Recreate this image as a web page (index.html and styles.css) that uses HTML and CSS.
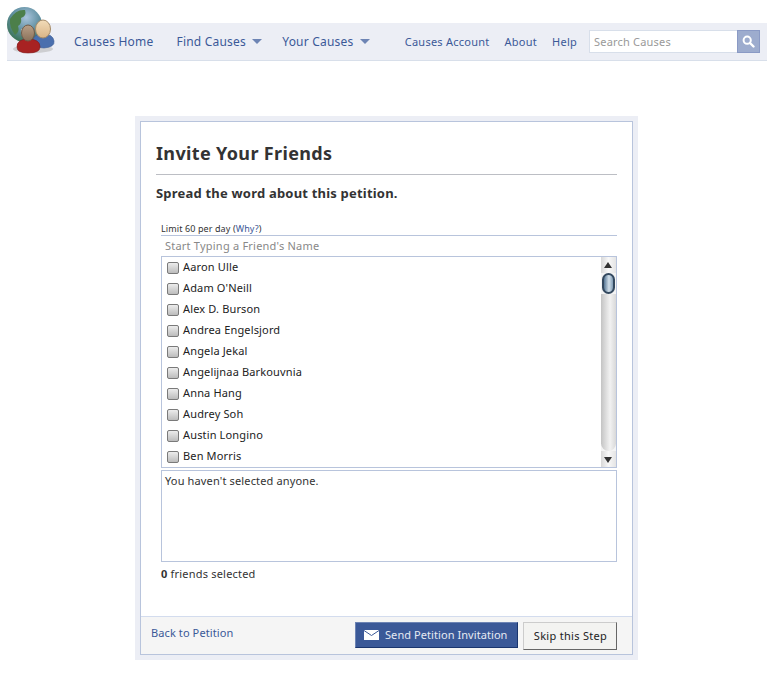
FILE: index.html
```html
<!DOCTYPE html>
<html lang="en">
<head>
    <meta charset="UTF-8">
    <meta name="viewport" content="width=device-width, initial-scale=1.0">
    <title>Invite Your Friends</title>
    <link rel="stylesheet" href="styles.css">
</head>
<body>
    <div class="header">
        <svg class="logo" width="50" height="50" viewBox="0 0 50 50">
            <defs>
                <radialGradient id="globe" cx="0.55" cy="0.3" r="0.8">
                    <stop offset="0" stop-color="#a9c4dc"/>
                    <stop offset="0.5" stop-color="#5f8fa0"/>
                    <stop offset="1" stop-color="#2f6a3c"/>
                </radialGradient>
                <linearGradient id="skinA" x1="0" y1="0" x2="0" y2="1">
                    <stop offset="0" stop-color="#f2dcb9"/>
                    <stop offset="1" stop-color="#d9b486"/>
                </linearGradient>
                <linearGradient id="skinB" x1="0" y1="0" x2="0" y2="1">
                    <stop offset="0" stop-color="#b8a088"/>
                    <stop offset="1" stop-color="#8b715a"/>
                </linearGradient>
            </defs>
            <ellipse cx="26" cy="42" rx="20" ry="4" fill="#b9b9b9" opacity="0.6"/>
            <circle cx="17.5" cy="17.5" r="17.5" fill="url(#globe)"/>
            <path d="M3 12 Q9 2 18 3 Q20 9 14 11 Q15 17 11 19 Q13 25 8 28 Q2 20 3 12Z" fill="#4c7f4a"/>
            <path d="M14 22 Q20 20 22 25 L18 32 Q13 29 14 22Z" fill="#c3cfc0"/>
            <path d="M26 33 Q27 27 36 27 Q46 27 47 34 Q48 40 37 41 Q27 41 26 33Z" fill="#4a6fae" stroke="#3c5c94" stroke-width="0.6"/>
            <ellipse cx="36" cy="22" rx="7.5" ry="9" fill="url(#skinA)" stroke="#a58b68"/>
            <path d="M10 40 Q10 32 21 32 Q33 32 33 40 Q33 46 21 46 Q10 46 10 40Z" fill="#a82222" stroke="#7f1818" stroke-width="0.6"/>
            <ellipse cx="21" cy="26" rx="6.5" ry="8" fill="url(#skinB)" stroke="#6f5a48"/>
        </svg>
        <nav class="nav-main">
            <a class="nav-home" href="#">Causes Home</a>
            <a href="#">Find Causes <span class="caret"></span></a>
            <a href="#">Your Causes <span class="caret"></span></a>
        </nav>
        <nav class="nav-side">
            <a href="#">Causes Account</a>
            <a href="#">About</a>
            <a href="#">Help</a>
        </nav>
        <form class="search">
            <input class="search-input" type="text" placeholder="Search Causes">
            <button class="search-btn" type="button">
                <svg width="13" height="13" viewBox="0 0 13 13">
                    <circle cx="5.2" cy="5.2" r="3.6" fill="none" stroke="#fff" stroke-width="2"/>
                    <path d="M8 8 L11.5 11.5" stroke="#fff" stroke-width="2.4" stroke-linecap="round"/>
                </svg>
            </button>
        </form>
    </div>

    <div class="dialog-outer">
        <div class="dialog">
            <div class="dialog-body">
                <h1>Invite Your Friends</h1>
                <h2>Spread the word about this petition.</h2>
                <div class="picker">
                    <div class="limit">Limit 60 per day (<a href="#">Why?</a>)</div>
                    <input class="friend-search" type="text" placeholder="Start Typing a Friend's Name">
                    <div class="friend-list">
                        <ul>
                            <li><span class="check"></span>Aaron Ulle</li>
                            <li><span class="check"></span>Adam O'Neill</li>
                            <li><span class="check"></span>Alex D. Burson</li>
                            <li><span class="check"></span>Andrea Engelsjord</li>
                            <li><span class="check"></span>Angela Jekal</li>
                            <li><span class="check"></span>Angelijnaa Barkouvnia</li>
                            <li><span class="check"></span>Anna Hang</li>
                            <li><span class="check"></span>Audrey Soh</li>
                            <li><span class="check"></span>Austin Longino</li>
                            <li><span class="check"></span>Ben Morris</li>
                        </ul>
                        <div class="scrollbar">
                            <div class="arrow arrow-up"></div>
                            <div class="thumb"></div>
                            <div class="track"></div>
                            <div class="arrow arrow-down"></div>
                        </div>
                    </div>
                    <div class="selected-box">You haven't selected anyone.</div>
                    <div class="count"><b>0</b> friends selected</div>
                </div>
            </div>
            <div class="dialog-footer">
                <a class="back" href="#">Back to Petition</a>
                <button class="btn-send" type="button">
                    <svg width="15" height="10" viewBox="0 0 15 10">
                        <rect width="15" height="10" fill="#fff"/>
                        <path d="M0 0.5 L7.5 5.5 L15 0.5" fill="none" stroke="#3b5998" stroke-width="1"/>
                    </svg>
                    Send Petition Invitation
                </button>
                <button class="btn-skip" type="button">Skip this Step</button>
            </div>
        </div>
    </div>
</body>
</html>
```

FILE: styles.css
```css
* {
    box-sizing: border-box;
}
body {
    margin: 0;
    font-family: "Noto Sans", sans-serif;
    font-size: 11px;
    letter-spacing: 0.15px;
    color: #333;
    background: #fff;
}
a {
    color: #3b5998;
    text-decoration: none;
}
input,
button {
    font-family: "Noto Sans", sans-serif;
    font-size: 11px;
    letter-spacing: 0.15px;
}
.header {
    position: relative;
    display: flex;
    align-items: center;
    height: 38px;
    margin: 23px 10px 0 7px;
    padding-left: 67px;
    background: #eceef5;
    border-bottom: 1px solid #d8dfea;
}
.logo {
    position: absolute;
    left: 0;
    top: -16px;
}
.nav-main {
    display: flex;
    gap: 20px;
    font-size: 12px;
    letter-spacing: 0.2px;
}
.nav-home {
    margin-right: 3px;
}
.caret {
    display: inline-block;
    width: 0;
    height: 0;
    margin-left: 3px;
    vertical-align: 2px;
    border-top: 5px solid #6d84b4;
    border-left: 5px solid transparent;
    border-right: 5px solid transparent;
}
.nav-side {
    display: flex;
    gap: 15px;
    margin-left: auto;
    letter-spacing: 0.25px;
}
.search {
    display: flex;
    margin-left: 12px;
    margin-right: 7px;
}
.search-input {
    width: 148px;
    height: 23px;
    padding: 0 4px;
    border: 1px solid #d8dfea;
    border-right: 0;
    background: #fff;
    letter-spacing: 0.2px;
}
.search-input::placeholder {
    color: #999;
}
.search-btn {
    display: flex;
    align-items: center;
    justify-content: center;
    width: 23px;
    height: 23px;
    padding: 0;
    background: #9dacce;
    border: 1px solid #8a9ac5;
}
.dialog-outer {
    width: 503px;
    margin: 55px 0 0 135px;
    padding: 5px;
    background: #eceef5;
}
.dialog {
    height: 534px;
    display: flex;
    flex-direction: column;
    background: #fff;
    border: 1px solid #b8c4dc;
}
.dialog-body {
    flex: 1;
    padding: 20px 15px 0;
}
h1 {
    margin: 0;
    padding-bottom: 9px;
    font-size: 18px;
    line-height: 23px;
    letter-spacing: 0.35px;
    color: #333;
    border-bottom: 1px solid #bcbec4;
}
h2 {
    margin: 10px 0 0;
    font-size: 13px;
    line-height: 17px;
    letter-spacing: 0.2px;
    color: #333;
}
.picker {
    margin: 19px 0 0 5px;
}
.limit {
    height: 14px;
    padding-top: 1px;
    font-size: 9px;
    line-height: 14px;
    letter-spacing: 0.1px;
}
.friend-search {
    display: block;
    width: 100%;
    height: 22px;
    padding: 0 4px 2px;
    border: 0;
    border-top: 1px solid #b8c4dc;
    border-bottom: 1px solid #b8c4dc;
    letter-spacing: 0.22px;
}
.friend-search::placeholder {
    color: #888;
}
.friend-list {
    display: flex;
    height: 211px;
    border-left: 1px solid #b8c4dc;
    border-right: 1px solid #b8c4dc;
    border-bottom: 1px solid #b8c4dc;
}
.friend-list ul {
    flex: 1;
    margin: -1px 0 0;
    padding: 0;
    list-style: none;
}
.friend-list li {
    display: flex;
    align-items: center;
    height: 21px;
    padding-left: 5px;
    color: #222;
}
.check {
    width: 12px;
    height: 12px;
    margin: 2px 4px 0 0;
    border: 1px solid #7a7a7a;
    border-radius: 2px;
    background: linear-gradient(#ececec, #bcbcbc);
}
.scrollbar {
    display: flex;
    flex-direction: column;
    width: 15px;
    background: #f4f4f4;
}
.arrow {
    position: relative;
    background: linear-gradient(90deg, #d8d8d8, #f8f8f8 50%, #e4e4e4);
}
.arrow::after {
    content: "";
    position: absolute;
    left: 3px;
    border-left: 4px solid transparent;
    border-right: 4px solid transparent;
}
.arrow-up {
    height: 16px;
}
.arrow-up::after {
    top: 5px;
    border-bottom: 6px solid #333;
}
.arrow-down {
    height: 16px;
}
.arrow-down::after {
    top: 6px;
    border-top: 6px solid #333;
}
.thumb {
    height: 21px;
    margin: 0 1px;
    border: 2px solid #34495f;
    border-radius: 7px;
    background: linear-gradient(90deg, #587896, #d3e0ea 55%, #7f9bb5);
}
.track {
    flex: 1;
    border-radius: 0 0 8px 8px;
    background: linear-gradient(90deg, #c4c4c4, #f2f2f2 60%, #d8d8d8);
}
.selected-box {
    height: 92px;
    margin-top: 2px;
    padding: 2px 3px;
    border: 1px solid #b8c4dc;
}
.count {
    margin-top: 5px;
    line-height: 14px;
    letter-spacing: 0.2px;
}
.dialog-footer {
    display: flex;
    align-items: flex-start;
    height: 38px;
    padding: 5px 15px 0 10px;
    background: #f5f5f5;
    border-top: 1px solid #d3dcee;
}
.back {
    margin: 3px auto 0 0;
    letter-spacing: 0.1px;
}
.btn-send {
    display: flex;
    align-items: center;
    gap: 6px;
    width: 163px;
    height: 26px;
    padding: 0 0 1px 8px;
    color: #e6eaf3;
    letter-spacing: 0.07px;
    background: #3b5998;
    border: 1px solid #6d84b4;
    border-right-color: #1a356e;
    border-bottom-color: #1a356e;
}
.btn-skip {
    width: 94px;
    height: 28px;
    margin-left: 5px;
    padding: 0 0 2px 1px;
    color: #222;
    letter-spacing: 0.3px;
    background: #f3f3f1;
    border: 1px solid #ccc;
    border-right-color: #666;
    border-bottom-color: #666;
}
```
